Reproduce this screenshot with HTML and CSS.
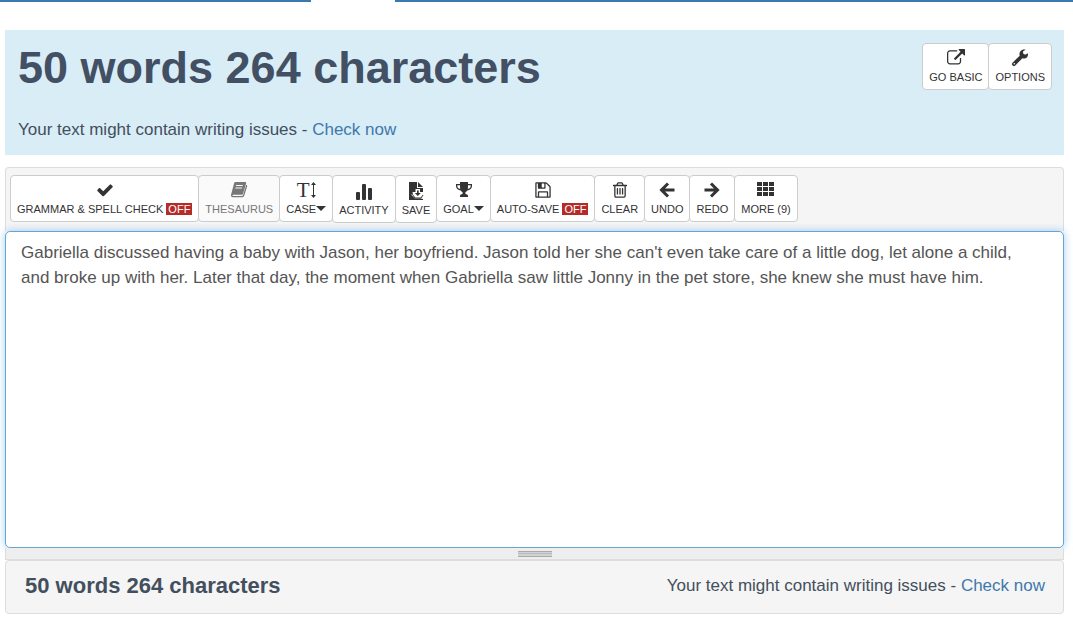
FILE: index.html
```html
<!DOCTYPE html>
<html lang="en">
<head>
    <meta charset="UTF-8">
    <meta name="viewport" content="width=device-width, initial-scale=1.0">
    <title>Word Counter</title>
    <link rel="stylesheet" href="styles.css">
</head>
<body>
    <div class="nav-line">
        <span class="nav-line-left"></span>
        <span class="nav-line-right"></span>
    </div>

    <main class="container">
        <div class="summary">
            <div class="summary-text">
                <h1>50 words 264 characters</h1>
                <p class="hint">Your text might contain writing issues - <a href="#">Check now</a></p>
            </div>
            <div class="btn-group">
                <button type="button" class="btn">
                    <svg class="icon" viewBox="0 0 1792 1792"><path d="M1408 928v320q0 119-84.500 203.500t-203.500 84.500h-832q-119 0-203.500-84.500t-84.500-203.500v-832q0-119 84.500-203.500t203.500-84.500h704q14 0 23 9t9 23v64q0 14-9 23t-23 9h-704q-66 0-113 47t-47 113v832q0 66 47 113t113 47h832q66 0 113-47t47-113v-320q0-14 9-23t23-9h64q14 0 23 9t9 23zm384-864v512q0 26-19 45t-45 19-45-19l-176-176-652 652q-10 10-23 10t-23-10l-114-114q-10-10-10-23t10-23l652-652-176-176q-19-19-19-45t19-45 45-19h512q26 0 45 19t19 45z"/></svg>
                    <span class="label">GO BASIC</span>
                </button>
                <button type="button" class="btn">
                    <svg class="icon" viewBox="0 0 18 18"><path fill-rule="evenodd" d="M16.800 4.200 14.200 5.800 12.100 4.600V2.300L14.700.800C12.800.100 10.600.700 9.400 2.300 8.400 3.600 8.200 5.200 8.700 6.700L1.500 13.700C.700 14.500.700 15.300 1.300 16L2 16.700C2.700 17.300 3.500 17.300 4.300 16.500L11.400 9.300C13.200 9.900 15.100 9.300 16.200 7.900 17 6.800 17.200 5.500 16.800 4.200ZM3.300 14A.800.800 0 1 1 3.300 15.600.800.800 0 0 1 3.300 14Z"/></svg>
                    <span class="label">OPTIONS</span>
                </button>
            </div>
        </div>

        <div class="toolbar">
            <button type="button" class="btn">
                <svg class="icon" viewBox="0 0 1792 1792"><path d="M1671 566q0 40-28 68l-724 724-136 136q-28 28-68 28t-68-28l-136-136-362-362q-28-28-28-68t28-68l136-136q28-28 68-28t68 28l294 295 656-657q28-28 68-28t68 28l136 136q28 28 28 68z"/></svg>
                <span class="label">GRAMMAR &amp; SPELL CHECK <span class="off">OFF</span></span>
            </button>
            <button type="button" class="btn" disabled>
                <svg class="icon" viewBox="0 0 18 18"><path fill-rule="evenodd" d="M5.400 1H15C16 1 16.400 1.700 16.100 2.600L13.200 12.200C12.900 13.200 12.200 13.700 11.200 13.700H3C2.300 13.700 2.200 14.900 3.100 14.900H11.800C12.500 14.900 12.900 14.600 13.100 14L16.300 3.700C17.200 4 17.400 4.600 17.100 5.500L14.300 14.500C13.900 15.600 13 16.300 12 16.300H3C1.400 16.300.600 15 1.100 13.600L4.100 2.200C4.300 1.400 4.700 1 5.400 1ZM6.200 4 5.900 5H12.700L13 4ZM5.500 6.400 5.200 7.400H12L12.300 6.400Z"/></svg>
                <span class="label">THESAURUS</span>
            </button>
            <button type="button" class="btn">
                <span class="icon-text">T<svg class="icon-height" viewBox="0 0 5 18"><path d="M2.500 1 5 4H3V14H5L2.500 17 0 14H2V4H0Z"/></svg></span>
                <span class="label">CASE<span class="caret"></span></span>
            </button>
            <button type="button" class="btn">
                <svg class="icon icon-tall" viewBox="0 0 18 19"><rect x="1" y="11" width="4" height="8" rx="1"/><rect x="7" y="3" width="4" height="16" rx="1"/><rect x="13" y="7" width="4" height="12" rx="1"/></svg>
                <span class="label">ACTIVITY</span>
            </button>
            <button type="button" class="btn">
                <svg class="icon icon-tall" viewBox="0 0 18 19"><path d="M2 1H10V7H16V19H2Z"/><path d="M11 1 16 6H11Z"/><path class="icon-cut" d="M8.500 8H13V11H16.500L16 16V18L14 17.500H8L4 13.500H6L5.500 11H8.500Z"/><path d="M10 9.500H11.700V12H13.800L10.800 15 7.800 12H10Z"/><path class="icon-tray" d="M5.500 13.500 8 17H14L16 14"/></svg>
                <span class="label">SAVE</span>
            </button>
            <button type="button" class="btn">
                <svg class="icon" viewBox="0 0 18 18"><path fill-rule="evenodd" d="M5 1H13V3H17V5C17 7.400 14.900 9.200 12.300 9.500 11.600 10.500 10.500 11 10.300 11.600 10 12.700 10.700 13.300 12 13.400 12.700 13.600 13 14 13 14.700V16H5V14.700C5 14 5.300 13.600 6 13.400 7.300 13.300 8 12.700 7.700 11.600 7.500 11 6.400 10.500 5.700 9.500 3.100 9.200 1 7.400 1 5V3H5ZM5 4.200H2.300V5C2.300 6.400 3.400 7.600 5.200 8.100 5 7 5 5.500 5 4.200ZM13 4.200C13 5.500 13 7 12.800 8.100 14.600 7.600 15.700 6.400 15.700 5V4.200Z"/></svg>
                <span class="label">GOAL<span class="caret"></span></span>
            </button>
            <button type="button" class="btn">
                <svg class="icon" viewBox="0 0 1792 1792"><path d="M512 1536h768v-384h-768v384zm896 0h128v-896q0-14-10-38.500t-20-34.500l-281-281q-10-10-34-20t-39-10v416q0 40-28 68t-68 28h-576q-40 0-68-28t-28-68v-416h-128v1280h128v-416q0-40 28-68t68-28h832q40 0 68 28t28 68v416zm-384-928v-320q0-13-9.500-22.500t-22.500-9.500h-192q-13 0-22.500 9.500t-9.500 22.500v320q0 13 9.500 22.500t22.500 9.500h192q13 0 22.500-9.500t9.500-22.500zm640 32v928q0 40-28 68t-68 28h-1344q-40 0-68-28t-28-68v-1344q0-40 28-68t68-28h928q40 0 88 20t76 48l280 280q28 28 48 76t20 88z"/></svg>
                <span class="label">AUTO-SAVE <span class="off">OFF</span></span>
            </button>
            <button type="button" class="btn">
                <svg class="icon" viewBox="0 0 1792 1792"><path d="M704 736v576q0 14-9 23t-23 9h-64q-14 0-23-9t-9-23v-576q0-14 9-23t23-9h64q14 0 23 9t9 23zm256 0v576q0 14-9 23t-23 9h-64q-14 0-23-9t-9-23v-576q0-14 9-23t23-9h64q14 0 23 9t9 23zm256 0v576q0 14-9 23t-23 9h-64q-14 0-23-9t-9-23v-576q0-14 9-23t23-9h64q14 0 23 9t9 23zm128 724v-948h-896v948q0 22 7 40.500t14.500 27 10.500 8.500h832q3 0 10.500-8.500t14.500-27 7-40.500zm-672-1076h448l-48-117q-7-9-17-11h-317q-10 2-17 11zm928 32v64q0 14-9 23t-23 9h-96v948q0 83-47 143.500t-113 60.500h-832q-66 0-113-58.500t-47-141.500v-952h-96q-14 0-23-9t-9-23v-64q0-14 9-23t23-9h309l70-167q15-37 54-63t79-26h320q40 0 79 26t54 63l70 167h309q14 0 23 9t9 23z"/></svg>
                <span class="label">CLEAR</span>
            </button>
            <button type="button" class="btn">
                <svg class="icon" viewBox="0 0 18 18"><path class="icon-arrow" d="M16.500 9H4M10 2.500 3.500 9 10 15.500"/></svg>
                <span class="label">UNDO</span>
            </button>
            <button type="button" class="btn">
                <svg class="icon" viewBox="0 0 18 18"><path class="icon-arrow" d="M1.500 9H14M8 2.500 14.500 9 8 15.500"/></svg>
                <span class="label">REDO</span>
            </button>
            <button type="button" class="btn">
                <svg class="icon icon-wide" viewBox="0 0 20 18"><path d="M1 1h5v4H1zM7 1h5v4H7zM13 1h5v4H13zM1 6h5v4H1zM7 6h5v4H7zM13 6h5v4H13zM1 11h5v4H1zM7 11h5v4H7zM13 11h5v4H13z"/></svg>
                <span class="label">MORE (9)</span>
            </button>
        </div>

        <textarea class="editor" rows="12" aria-label="Your text" spellcheck="false">Gabriella discussed having a baby with Jason, her boyfriend. Jason told her she can't even take care of a little dog, let alone a child, and broke up with her. Later that day, the moment when Gabriella saw little Jonny in the pet store, she knew she must have him.</textarea>

        <!-- Resize handle -->
        <div class="grip"><span class="grip-lines"></span></div>

        <div class="footer">
            <h2>50 words 264 characters</h2>
            <p class="hint">Your text might contain writing issues - <a href="#">Check now</a></p>
        </div>
    </main>
</body>
</html>
```

FILE: styles.css
```css
* {
    box-sizing: border-box;
}

body {
    font-family: "Liberation Sans", Arial, sans-serif;
    font-size: 17px;
    color: #434f5d;
    background-color: #fff;
    margin: 0;
}

h1,
h2,
p {
    margin: 0;
}

a {
    color: #4078ac;
    text-decoration: none;
}

a:hover {
    text-decoration: underline;
}

/* Line under the menu, open below the active tab */
.nav-line {
    display: flex;
    gap: 84px;
    height: 2px;
}

.nav-line-left,
.nav-line-right {
    background-color: #3c78b0;
}

.nav-line-left {
    flex: 0 0 29%;
}

.nav-line-right {
    flex: 1;
}

.container {
    padding: 28px 9px 7px 5px;
}

.summary {
    display: flex;
    justify-content: space-between;
    align-items: flex-start;
    padding: 13px 12px 13px 13px;
    margin-bottom: 12px;
    background-color: #d9edf7;
}

h1 {
    font-size: 45px;
    line-height: 50px;
    color: #434f63;
    margin-bottom: 24px;
}

h2 {
    font-size: 22px;
    line-height: 25px;
    color: #434f5d;
}

.hint {
    line-height: 25px;
}

.btn-group,
.toolbar {
    display: flex;
    align-items: flex-start;
}

.btn {
    display: flex;
    flex-direction: column;
    align-items: center;
    gap: 1px;
    padding: 5px 6px 3px;
    border: 1px solid #ccc;
    border-radius: 4px;
    background-color: #fff;
    color: #333;
    font-family: inherit;
    font-size: 11px;
    line-height: 18px;
    white-space: nowrap;
    cursor: pointer;
}

.btn + .btn {
    margin-left: -1px;
}

.btn:hover {
    background-color: #e6e6e6;
}

.btn:disabled {
    background-color: #fafafa;
    color: #777;
    cursor: not-allowed;
}

.icon {
    width: 18px;
    height: 18px;
    fill: currentColor;
}

.icon-wide {
    width: 20px;
}

.icon-tall {
    height: 19px;
}

.icon-text {
    display: flex;
    align-items: center;
    gap: 1px;
    height: 18px;
    font-family: "Liberation Serif", serif;
    font-size: 21px;
}

.icon-height {
    width: 5px;
    height: 18px;
    fill: currentColor;
}

.icon-cut {
    fill: #fff;
}

.icon-tray {
    fill: none;
    stroke: currentColor;
    stroke-width: 1;
}

.icon-arrow {
    fill: none;
    stroke: currentColor;
    stroke-width: 3;
}

.off {
    display: inline-block;
    padding: 0 2px;
    line-height: 12px;
    background-color: #b52b27;
    color: #fff;
}

.caret {
    display: inline-block;
    border-top: 5px solid;
    border-left: 5px solid transparent;
    border-right: 5px solid transparent;
    vertical-align: 2px;
}

.toolbar {
    flex-wrap: wrap;
    padding: 7px 4px 8px;
    border: 1px solid #ddd;
    border-bottom: 0;
    border-radius: 4px 4px 0 0;
    background-color: #f5f5f5;
}

.editor {
    display: block;
    position: relative;
    width: 100%;
    padding: 8px 24px 7px 15px;
    border: 1px solid #66a5d4;
    border-radius: 5px;
    outline: 0;
    background-color: #fff;
    box-shadow: 0 0 8px rgba(102, 175, 233, 0.6);
    color: #555;
    font-family: inherit;
    font-size: 17px;
    line-height: 25px;
    resize: none;
}

.grip {
    display: flex;
    justify-content: center;
    align-items: center;
    position: relative;
    height: 12px;
    border: 1px solid #ddd;
    border-top: 0;
    background-color: #eee;
    cursor: s-resize;
}

.grip-lines {
    width: 34px;
    height: 6px;
    border-top: 1px solid #aaa;
    border-bottom: 1px solid #aaa;
    background: linear-gradient(#d2d2d2 1px, #bbb 1px, #bbb 2px, #d2d2d2 2px);
}

.footer {
    display: flex;
    justify-content: space-between;
    align-items: center;
    padding: 12px 18px 15px 19px;
    border: 1px solid #ddd;
    border-radius: 4px;
    background-color: #f5f5f5;
}
```
